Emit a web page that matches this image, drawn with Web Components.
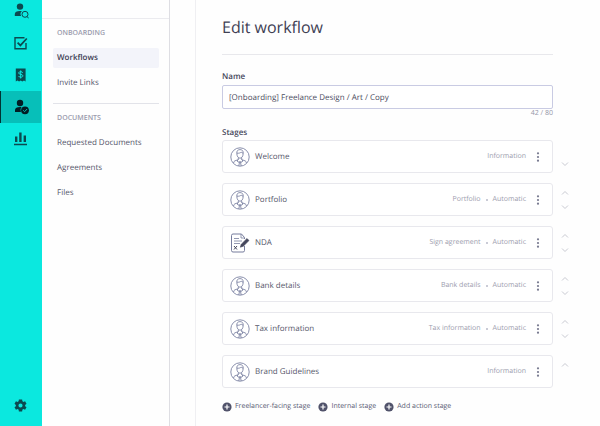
<!DOCTYPE html>
<html lang="en">
<head>
<meta charset="utf-8">
<title>Edit workflow</title>
<style>
  html, body { height: 100%; }
  body { margin: 0; background: #fefefe; color: #4b4c5e; font: 8px/12px "Open Sans", "Noto Sans", sans-serif; text-rendering: geometricPrecision; overflow: hidden; }
</style>
</head>
<body>
<app-shell>
  <icon-rail slot="rail"></icon-rail>
  <side-nav slot="nav">
    <nav-group heading="ONBOARDING">
      <nav-link current>Workflows</nav-link>
      <nav-link>Invite Links</nav-link>
    </nav-group>
    <nav-group heading="DOCUMENTS">
      <nav-link>Requested Documents</nav-link>
      <nav-link>Agreements</nav-link>
      <nav-link>Files</nav-link>
    </nav-group>
  </side-nav>
  <workflow-editor heading="Edit workflow">
    <name-field slot="name" label="Name" value="[Onboarding] Freelance Design / Art / Copy" count="42 / 80"></name-field>
    <stage-row kind="Information" down>Welcome</stage-row>
    <stage-row kind="Portfolio" mode="Automatic" up down>Portfolio</stage-row>
    <stage-row kind="Sign agreement" mode="Automatic" icon="contract" up down>NDA</stage-row>
    <stage-row kind="Bank details" mode="Automatic" up down>Bank details</stage-row>
    <stage-row kind="Tax information" mode="Automatic" up down>Tax information</stage-row>
    <stage-row kind="Information" up>Brand Guidelines</stage-row>
    <add-button slot="actions">Freelancer-facing stage</add-button>
    <add-button slot="actions">Internal stage</add-button>
    <add-button slot="actions">Add action stage</add-button>
  </workflow-editor>
</app-shell>

<script>
const RESET = `
  *, *::before, *::after { box-sizing: border-box; }
  h1, h2, ul { margin: 0; padding: 0; font: inherit; list-style: none; }
  button { appearance: none; border: 0; padding: 0; background: none; color: inherit; font: inherit; text-rendering: inherit; cursor: pointer; }
  input { text-rendering: inherit; }
  a { color: inherit; text-decoration: none; }
  svg { display: block; }
`;

class BaseElement extends HTMLElement {
  connectedCallback() {
    if (this.shadowRoot) return;
    this.attachShadow({ mode: 'open' }).innerHTML = `<style>${RESET}${this.styles()}</style>${this.markup()}`;
  }
  attr(name) { return this.getAttribute(name) || ''; }
}

customElements.define('app-shell', class extends BaseElement {
  styles() { return `
    :host { display: grid; grid-template-columns: 42px 128px minmax(0, 1fr); min-height: 100vh; }
    main { margin-left: 25px; border-left: 1px solid #efeff2; min-width: 0; }
  `; }
  markup() { return `<slot name="rail"></slot><slot name="nav"></slot><main><slot></slot></main>`; }
});

customElements.define('icon-rail', class extends BaseElement {
  styles() { return `
    :host { display: flex; background: #0be8df; color: #0b4a50; }
    nav { flex: 1; display: flex; flex-direction: column; margin-top: -5px; padding-bottom: 5px; }
    a { display: flex; align-items: center; height: 32px; padding-left: 12px; border-left: 1px solid transparent; }
    a[aria-current] { background: #07bfb9; border-left-color: #033; color: #021c24; margin-right: 1px; }
    a:last-child { margin-top: auto; }
  `; }
  markup() { return `
    <nav aria-label="Main">
      <a href="#search" aria-label="Find people"><svg width="16" height="16" viewBox="0 0 16 16"><circle cx="7" cy="3.600" r="3.200" fill="currentColor"/><path d="M1.800 13V11c0-2 2-3 5-3h2.200a4 4 0 0 0-.9 5z" fill="currentColor"/><circle cx="12" cy="11.300" r="3" fill="none" stroke="currentColor"/><path d="M13.800 13.400l2 2" stroke="currentColor"/></svg></a>
      <a href="#tasks" aria-label="Tasks"><svg width="16" height="16" viewBox="0 0 16 16" fill="none" stroke="currentColor" stroke-width="1.400"><path d="M11.500 2.800H2v11h11V8"/><path d="M4.600 7.600l2.800 2.800 6.400-6.900" stroke-width="1.700"/></svg></a>
      <a href="#invoices" aria-label="Invoices"><svg width="16" height="16" viewBox="0 0 16 16"><path d="M2.800 1.500h9.800V14.500l-1.600-1-1.700 1-1.600-1-1.600 1-1.700-1-1.600 1z" fill="currentColor"/><path d="M9.800 5.700C9.300 4.900 8.600 4.700 7.700 4.700 6.500 4.700 5.700 5.200 5.700 6c0 2 4.200.8 4.200 2.800 0 .9-.9 1.400-2.100 1.400-1.100 0-1.900-.4-2.300-1.200M7.700 3.400v8.100" fill="none" stroke="#0be8df"/></svg></a>
      <a href="#onboarding" aria-label="Onboarding" aria-current="page"><svg width="16" height="16" viewBox="0 0 16 16"><circle cx="7" cy="4" r="3.200" fill="currentColor"/><path d="M2 13V11c0-2 2-3 5-3h1.500a4.500 4.500 0 0 0-.6 5z" fill="currentColor"/><circle cx="12" cy="11.300" r="3.900" fill="currentColor"/><path d="M10.200 11.300l1.400 1.400 2.500-2.700" fill="none" stroke="#07bfb9"/></svg></a>
      <a href="#reports" aria-label="Reports"><svg width="16" height="16" viewBox="0 0 16 16" fill="currentColor"><path d="M2 5.500h2.400V11H2zM6.200 1.500h2.400V11H6.200zM10.600 4.500H13V11h-2.400zM1 12.800h13v1.400H1z"/></svg></a>
      <a href="#settings" aria-label="Settings"><svg width="15" height="15" viewBox="0 0 24 24" fill="currentColor"><path d="M19.400 13a7.500 7.500 0 0 0 0-2l2.200-1.700-2.300-4-2.600 1a8 8 0 0 0-1.700-1L14.600 2.500H9.400L9 5.300a8 8 0 0 0-1.700 1l-2.600-1-2.300 4L4.600 11a7.500 7.500 0 0 0 0 2l-2.200 1.700 2.300 4 2.600-1a8 8 0 0 0 1.700 1l.4 2.800h5.200l.4-2.800a8 8 0 0 0 1.700-1l2.600 1 2.300-4zM12 15.300a3.300 3.300 0 1 1 0-6.600 3.300 3.300 0 0 1 0 6.600z" fill-rule="evenodd"/></svg></a>
    </nav>`; }
});

customElements.define('side-nav', class extends BaseElement {
  styles() { return `
    :host { display: block; padding-top: 18px; border-right: 1px solid #dedee3; }
    nav { border-top: 1px solid #ebebef; padding: 0 10px 0 11px; }
  `; }
  markup() { return `<nav aria-label="Section"><slot></slot></nav>`; }
});

customElements.define('nav-group', class extends BaseElement {
  styles() { return `
    :host { display: block; padding: 9px 0 10px; }
    :host(:not(:first-child)) { border-top: 1px solid #e2e3e9; }
    h2 { padding-left: 4px; font-weight: 600; font-size: 7px; line-height: 12px; color: #9a9bad; }
    div { display: grid; gap: 5px; margin-top: 8px; }
  `; }
  markup() { return `<h2>${this.attr('heading')}</h2><div><slot></slot></div>`; }
});

customElements.define('nav-link', class extends BaseElement {
  styles() { return `
    :host { display: block; }
    a { display: block; padding: 4px; line-height: 12px; border-radius: 2px; color: #55566b; }
    :host([current]) a { background: #f3f4fa; color: #3c3d52; font-weight: 600; }
  `; }
  markup() { return `<a href="#"${this.hasAttribute('current') ? ' aria-current="page"' : ''}><slot></slot></a>`; }
});

customElements.define('workflow-editor', class extends BaseElement {
  styles() { return `
    :host { display: block; padding: 15px 23px 12px 26px; }
    header, .name, .actions { margin-right: 24px; }
    header { padding-bottom: 15px; border-bottom: 1px solid #e8e8ec; }
    h1 { font-size: 16px; line-height: 24px; color: #3f4054; }
    .name { margin-top: 16px; }
    h2 { margin-top: 8px; font-weight: 600; line-height: 12px; color: #45465a; }
    .stages { display: grid; gap: 10px; margin-top: 1px; }
    .actions { display: flex; flex-wrap: wrap; gap: 8px; margin-top: 13px; }
  `; }
  markup() { return `
    <header><h1>${this.attr('heading')}</h1></header>
    <div class="name"><slot name="name"></slot></div>
    <h2>Stages</h2>
    <div class="stages"><slot></slot></div>
    <div class="actions"><slot name="actions"></slot></div>`; }
});

customElements.define('name-field', class extends BaseElement {
  styles() { return `
    :host { display: grid; }
    label { font-weight: 600; color: #45465a; }
    input { width: 100%; height: 24px; margin-top: 2px; padding: 0 6px; border: 1px solid #c9cbe3; border-radius: 2px; background: #fff; font: inherit; color: #4b4c5e; outline: 0; }
    span { justify-self: end; font-size: 7px; line-height: 10px; color: #9697a9; }
  `; }
  markup() { return `
    <label for="name">${this.attr('label')}</label>
    <input id="name" type="text" maxlength="80" value="${this.attr('value')}">
    <span>${this.attr('count')}</span>`; }
});

const PERSON = `<svg width="20" height="20" viewBox="0 0 20 20" fill="none" stroke="#7c82a3" stroke-width=".9"><circle cx="10" cy="10" r="9.200"/><path d="M6.800 6.500C6.600 3.800 8 2.600 10 2.600s3.500 1.200 3.200 3.900c-.2 2.900-1.400 4.700-3.200 4.700S7 9.400 6.800 6.500z"/><path d="M6.900 6.200c1.800.2 3.500-.2 4.300-1.200.4.8 1.100 1.100 2 1.200M8.300 10.600v2L4.800 13.900c-.8.400-1.100 1-1.200 2.100M11.700 10.600v2l3.500 1.300c.8.400 1.100 1 1.200 2.100M8.300 12.600L7 14l2 1.300 1-1 1 1 2-1.300-1.300-1.400M9.600 14.800l-.8 4.200M10.400 14.800l.8 4.200"/></svg>`;
const CONTRACT = `<svg width="20" height="20" viewBox="0 0 20 20" fill="none" stroke="#777d9d"><path d="M14.500 6V4.500L11.500 1H3Q1.500 1 1.500 2.500v15Q1.500 19 3 19h10q1.500 0 1.500-1.500V13"/><path d="M11 1v4h3.500M4 5.500h5M4 8h8M4 10.500h6" stroke-width=".8"/><path d="M4 13l3 3.500M7 13l-3 3.500" stroke="#44465c"/><path d="M10.300 14.200l1-3L17 5.500l2 2-5.700 5.700z" fill="#44465c" stroke="#44465c" stroke-width=".6"/></svg>`;

customElements.define('stage-row', class extends BaseElement {
  styles() { return `
    :host { display: grid; grid-template-columns: minmax(0, 1fr) 24px; }
    article { display: flex; align-items: center; height: 33px; padding: 0 7px; border: 1px solid #e8e8ed; border-radius: 3px; background: #fff; }
    .label { flex: 1; margin-left: 5px; color: #56576a; }
    .meta { display: flex; align-items: center; font-size: 7px; color: #9c9dae; }
    .meta i { width: 2px; height: 2px; margin: 0 5px; border-radius: 50%; background: #b9bac8; }
    .menu { margin-left: 5px; width: 14px; height: 16px; display: grid; place-items: center; }
    .order { display: grid; grid-template-rows: 14px 14px; align-content: center; justify-items: center; }
    .order button { display: grid; place-items: center; width: 14px; }
    .down { grid-row: 2; }
  `; }
  markup() {
    const arrow = (dir, d) => this.hasAttribute(dir)
      ? `<button class="${dir}" type="button" aria-label="Move ${dir}"><svg width="8" height="6" viewBox="0 0 8 6" fill="none" stroke="#c9cad2"><path d="${d}"/></svg></button>` : '';
    return `
      <article>
        ${this.attr('icon') === 'contract' ? CONTRACT : PERSON}
        <span class="label"><slot></slot></span>
        <span class="meta"><span>${this.attr('kind')}</span>${this.attr('mode') ? `<i></i><span>${this.attr('mode')}</span>` : ''}</span>
        <button class="menu" type="button" aria-label="Stage options"><svg width="4" height="10" viewBox="0 0 4 10" fill="#77798f"><circle cx="2" cy="1.300" r="1.100"/><circle cx="2" cy="5" r="1.100"/><circle cx="2" cy="8.700" r="1.100"/></svg></button>
      </article>
      <div class="order">${arrow('up', 'M1 4.500l3-3 3 3')}${arrow('down', 'M1 1.500l3 3 3-3')}</div>`;
  }
});

customElements.define('add-button', class extends BaseElement {
  styles() { return `
    :host { display: block; }
    button { display: flex; align-items: center; gap: 3px; font-size: 7px; line-height: 12px; font-weight: 500; color: #595b74; }
  `; }
  markup() { return `<button type="button"><svg width="10" height="10" viewBox="0 0 10 10"><circle cx="5" cy="5" r="4.600" fill="#50526a"/><path d="M5 2.500v5M2.500 5h5" stroke="#fff" stroke-width="1.200"/></svg><slot></slot></button>`; }
});
</script>
</body>
</html>
